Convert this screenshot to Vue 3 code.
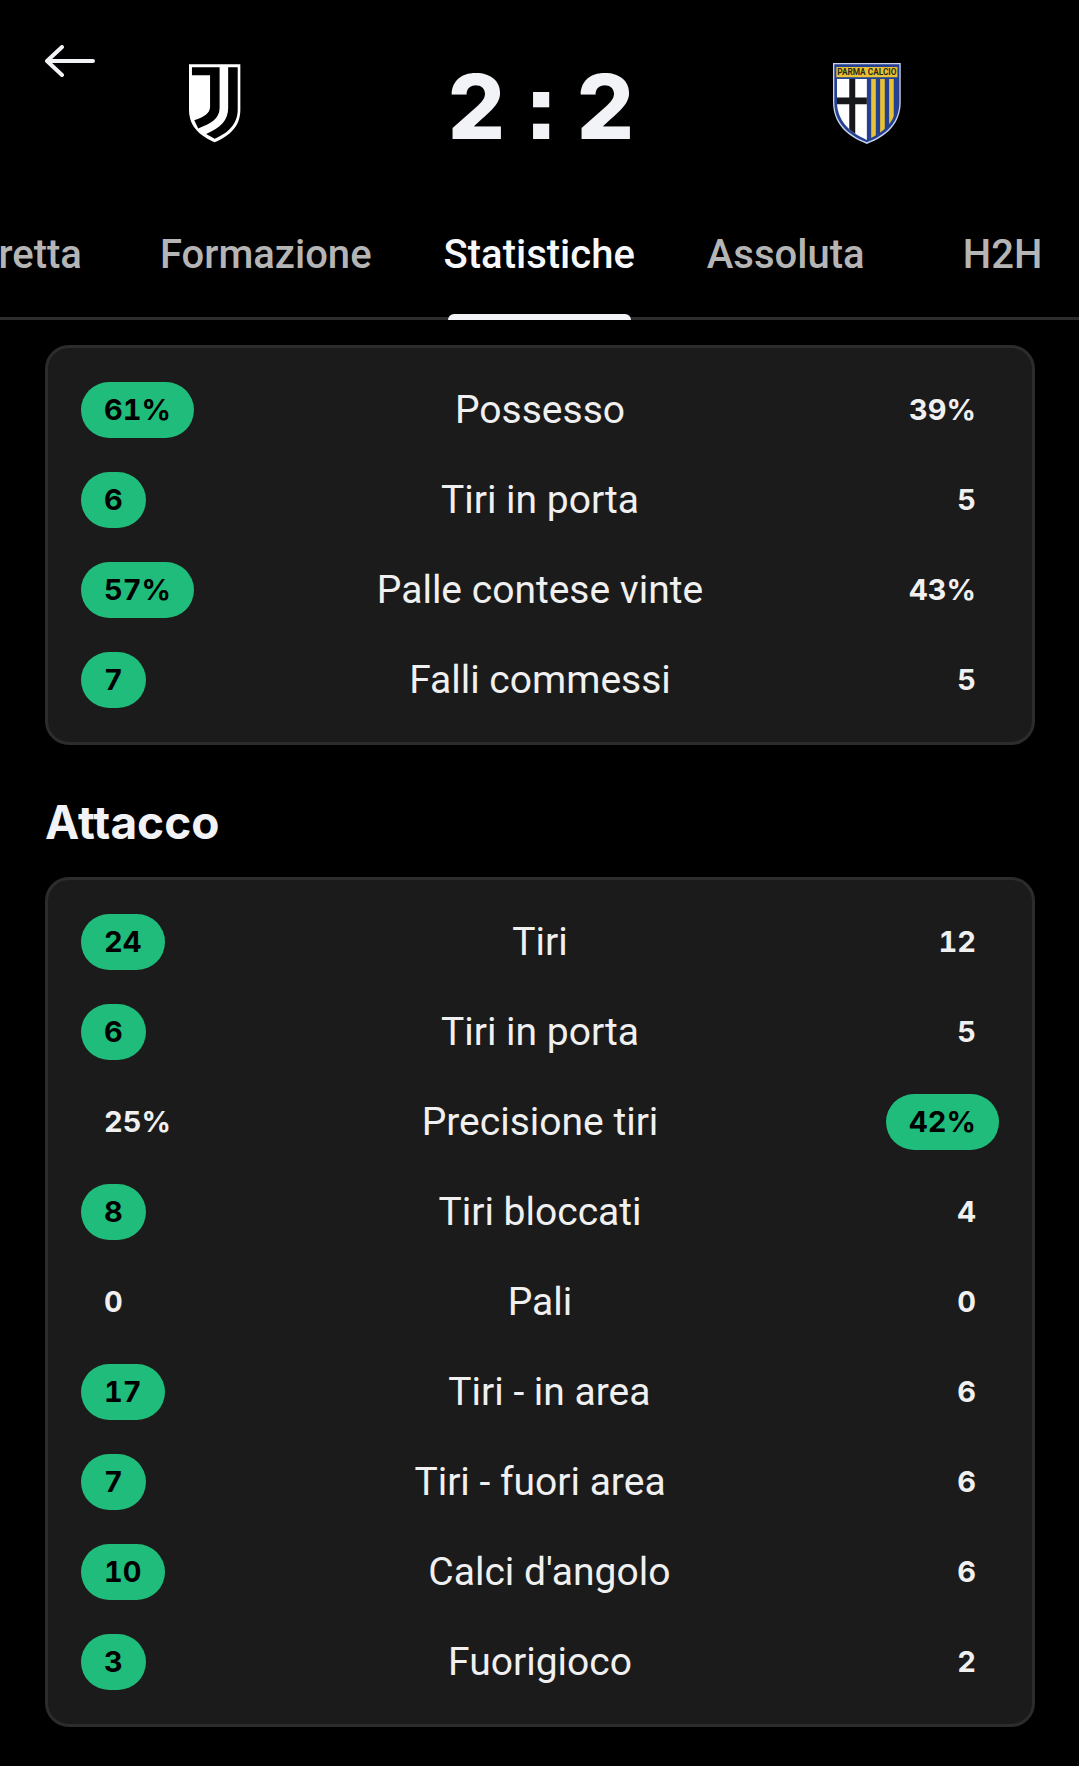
<script setup>
import { ref, onMounted } from "vue";

const tabs = ["Diretta", "Formazione", "Statistiche", "Assoluta", "H2H"];
const activeTab = ref("Statistiche");
const tabBar = ref(null);

const score = { home: 2, away: 2 };

const groups = [
  {
    title: "",
    stats: [
      { label: "Possesso", home: "61%", away: "39%", best: "home" },
      { label: "Tiri in porta", home: "6", away: "5", best: "home" },
      { label: "Palle contese vinte", home: "57%", away: "43%", best: "home" },
      { label: "Falli commessi", home: "7", away: "5", best: "home" },
    ],
  },
  {
    title: "Attacco",
    stats: [
      { label: "Tiri", home: "24", away: "12", best: "home" },
      { label: "Tiri in porta", home: "6", away: "5", best: "home" },
      { label: "Precisione tiri", home: "25%", away: "42%", best: "away" },
      { label: "Tiri bloccati", home: "8", away: "4", best: "home" },
      { label: "Pali", home: "0", away: "0", best: "" },
      { label: "Tiri - in area", home: "17", away: "6", best: "home" },
      { label: "Tiri - fuori area", home: "7", away: "6", best: "home" },
      { label: "Calci d'angolo", home: "10", away: "6", best: "home" },
      { label: "Fuorigioco", home: "3", away: "2", best: "home" },
    ],
  },
];

// keep the active tab in the middle of the bar
const centerTab = (el) => {
  const bar = tabBar.value;
  bar.scrollLeft = el.offsetLeft + el.offsetWidth / 2 - bar.clientWidth / 2;
};

const selectTab = (tab, event) => {
  activeTab.value = tab;
  centerTab(event.currentTarget);
};

onMounted(() => {
  centerTab(tabBar.value.querySelector(".active"));
});
</script>

<template>
  <div class="match-page">
    <header class="match-header">
      <button class="back-btn" type="button" aria-label="Indietro">
        <svg class="back-icon" viewBox="0 0 50 32">
          <path d="M17 2 2 16 17 30M2 16H48" />
        </svg>
      </button>

      <svg class="crest home-crest" viewBox="476 101 156 240" role="img" aria-label="Juventus">
        <path
          fill="#fff"
          d="M476 102H632V240C632 295 594 321 554 339C514 321 476 295 476 240Z"
        />
        <path
          fill="#000"
          d="M485 111H569V235C569 268 542 282 504 297L492 272C522 261 540 252 540 230V135H485Z"
        />
        <path
          fill="#000"
          d="M595 111H624V240C624 285 592 312 554 328L528 314C572 295 595 272 595 235Z"
        />
      </svg>

      <h1 class="score">
        <span>{{ score.home }}</span>
        <span>:</span>
        <span>{{ score.away }}</span>
      </h1>

      <svg class="crest away-crest" viewBox="98 68 204 244" role="img" aria-label="Parma Calcio">
        <defs>
          <clipPath id="parma-field">
            <path d="M110 116H290V185C290 240 255 276 200 300C145 276 110 240 110 185Z" />
          </clipPath>
        </defs>
        <path
          fill="#c9d2ee"
          d="M98 68H302V185C302 250 262 288 200 312C138 288 98 250 98 185Z"
        />
        <path
          fill="#24418f"
          d="M102 72H298V185C298 247 260 284 200 307C140 284 102 247 102 185Z"
        />
        <path fill="#e8c235" d="M108 80H292V111H108Z" />
        <text x="200" y="105" class="crest-text">PARMA CALCIO</text>
        <g clip-path="url(#parma-field)">
          <path fill="#fff" d="M109 116H200V302H109Z" />
          <path fill="#15171a" d="M147 116H165V302H147ZM109 172H200V192H109Z" />
          <path
            fill="#e8c235"
            d="M213 116H227V302H213ZM240 116H254V302H240ZM267 116H281V302H267Z"
          />
        </g>
      </svg>
    </header>

    <nav ref="tabBar" class="tab-bar">
      <button
        v-for="tab in tabs"
        :key="tab"
        type="button"
        :class="['tab', { active: tab === activeTab }]"
        @click="selectTab(tab, $event)"
      >
        {{ tab }}
      </button>
    </nav>

    <main class="stats">
      <section v-for="group in groups" :key="group.title" class="stats-group">
        <h2 v-if="group.title" class="group-title">{{ group.title }}</h2>
        <table class="stats-card">
          <tbody>
            <tr v-for="stat in group.stats" :key="stat.label" class="stat-row">
              <td :class="['stat-value', { best: stat.best === 'home' }]">{{ stat.home }}</td>
              <th scope="row" class="stat-label">{{ stat.label }}</th>
              <td :class="['stat-value', { best: stat.best === 'away' }]">{{ stat.away }}</td>
            </tr>
          </tbody>
        </table>
      </section>
    </main>
  </div>
</template>

<style>
body {
  margin: 0;
  background: #000;
}
</style>

<style scoped>
.match-page {
  background: #000;
  color: #f2f3f7;
  font-family: Roboto, "Liberation Sans", sans-serif;
}

.match-header {
  display: grid;
  grid-template-columns: 24fr 22fr 24fr;
  grid-template-rows: 117px;
  align-items: center;
  justify-items: center;
  padding: 45px 42px 26px 45px;
}

.back-btn {
  grid-area: 1 / 1;
  align-self: start;
  justify-self: start;
  padding: 0;
  border: none;
  background: none;
  cursor: pointer;
}

.back-icon {
  display: block;
  width: 50px;
  height: 32px;
  fill: none;
  stroke: #f2f3f7;
  stroke-width: 4;
  stroke-linecap: round;
  stroke-linejoin: round;
}

.home-crest {
  grid-area: 1 / 1;
  height: 79px;
}

.away-crest {
  height: 81px;
}

.crest-text {
  font-family: Roboto, sans-serif;
  font-size: 25px;
  font-weight: 700;
  text-anchor: middle;
  fill: #2a2a1c;
}

.score {
  display: flex;
  gap: 20px;
  margin: 0;
  padding-top: 6px;
  font-family: Inter, sans-serif;
  font-size: 90px;
  font-weight: 800;
  font-feature-settings: "ss07";
  line-height: 1;
}

.tab-bar {
  position: relative;
  display: flex;
  overflow-x: auto;
  scrollbar-width: none;
  box-shadow: inset 0 -3px #2c2c2c;
}

.tab {
  position: relative;
  flex: none;
  min-width: 204px;
  height: 132px;
  padding: 0 36px;
  border: none;
  background: none;
  color: #b5b5b5;
  font-family: inherit;
  font-size: 40px;
  font-weight: 500;
  cursor: pointer;
}

.tab.active {
  color: #f7f8fc;
}

.tab.active::after {
  content: "";
  position: absolute;
  right: 40px;
  bottom: 0;
  left: 40px;
  height: 6px;
  border-radius: 6px 6px 0 0;
  background: #f2f3f7;
}

.stats {
  padding: 25px 44px 39px 45px;
}

.group-title {
  margin: 50px 0 28px;
  font-family: Inter, sans-serif;
  font-size: 46px;
  font-weight: 700;
  line-height: 54px;
}

.stats-card {
  display: block;
  padding: 17px 33px;
  border: 3px solid #2c2c2c;
  border-radius: 24px;
  background: #1b1b1b;
}

.stats-card tbody {
  display: block;
}

.stat-row {
  display: flex;
  align-items: center;
  height: 90px;
}

.stat-value {
  padding: 0 23px;
  border-radius: 28px;
  color: #f0f0f0;
  font-family: Inter, sans-serif;
  font-size: 29px;
  font-weight: 700;
  font-variant-numeric: tabular-nums;
  line-height: 56px;
}

.stat-value.best {
  background: #1fbc7b;
  color: #000;
}

.stat-label {
  flex: 1;
  padding: 0;
  color: #f0f0f0;
  font-size: 39px;
  font-weight: 400;
  line-height: 48px;
  text-align: center;
}
</style>
